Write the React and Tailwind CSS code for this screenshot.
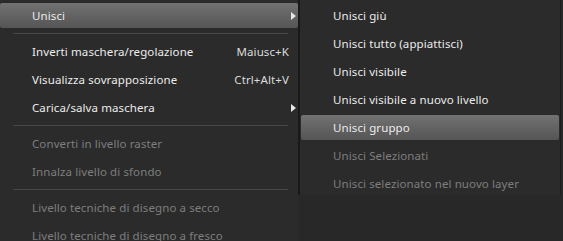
import React from 'react';

const leftItems = [
  { label: 'Unisci', arrow: true, active: true },
  { sep: true },
  { label: 'Inverti maschera/regolazione', shortcut: 'Maiusc+K' },
  { label: 'Visualizza sovrapposizione', shortcut: 'Ctrl+Alt+V' },
  { label: 'Carica/salva maschera', arrow: true },
  { sep: true },
  { label: 'Converti in livello raster', disabled: true },
  { label: 'Innalza livello di sfondo', disabled: true },
  { sep: true },
  { label: 'Livello tecniche di disegno a secco', disabled: true },
  { label: 'Livello tecniche di disegno a fresco', disabled: true },
];

const rightItems = [
  { label: 'Unisci giù' },
  { label: 'Unisci tutto (appiattisci)' },
  { label: 'Unisci visibile' },
  { label: 'Unisci visibile a nuovo livello' },
  { label: 'Unisci gruppo', active: true },
  { label: 'Unisci Selezionati', disabled: true },
  { label: 'Unisci selezionato nel nuovo layer', disabled: true },
];

const Arrow = () => (
  <svg width="5" height="8" viewBox="0 0 5 8" className="shrink-0">
    <path d="M0 0 L5 4 L0 8 Z" fill="#e8e8e8" />
  </svg>
);

const Row = ({ item }) => {
  if (item.sep) {
    return (
      <div className="h-[8px] flex items-center pl-[13px] pr-[10px]">
        <div className="h-px w-full bg-[#474747]" />
      </div>
    );
  }
  return (
    <div className="h-[28px] pt-[2px] pb-[1px]">
      <div
        className={
          'h-full flex items-center rounded-[2px] pl-[32px]' +
          (item.active ? ' bg-gradient-to-b from-[#727272] to-[#555555]' : '')
        }
      >
        <span
          className={
            'flex-1 whitespace-nowrap ' +
            (item.disabled ? 'text-[#7e7e7e]' : 'text-[#ececec]')
          }
        >
          {item.label}
        </span>
        {item.shortcut && (
          <span className="text-[#dcdcdc] whitespace-nowrap">{item.shortcut}</span>
        )}
        <div className="w-[9px] flex justify-end pr-[2px]">
          {item.arrow && <Arrow />}
        </div>
      </div>
    </div>
  );
};

export default function App() {
  return (
    <div
      className="w-[563px] h-[241px] overflow-hidden bg-[#282828] flex items-start text-[11.5px] tracking-[0.1px]"
      style={{ fontFamily: '"Noto Sans", "Open Sans", sans-serif' }}
    >
      <div className="w-[298px] h-[241px] bg-[#2b2b2b] pt-px">
        {leftItems.map((it, i) => (
          <Row key={i} item={it} />
        ))}
      </div>
      <div className="w-[263px] h-[195px] bg-[#2b2b2b] border-l-2 border-[#191919] border-r border-r-[#1c1c1c] pt-px pl-[1px] pr-px">
        {rightItems.map((it, i) => (
          <Row key={i} item={it} />
        ))}
      </div>
    </div>
  );
}
